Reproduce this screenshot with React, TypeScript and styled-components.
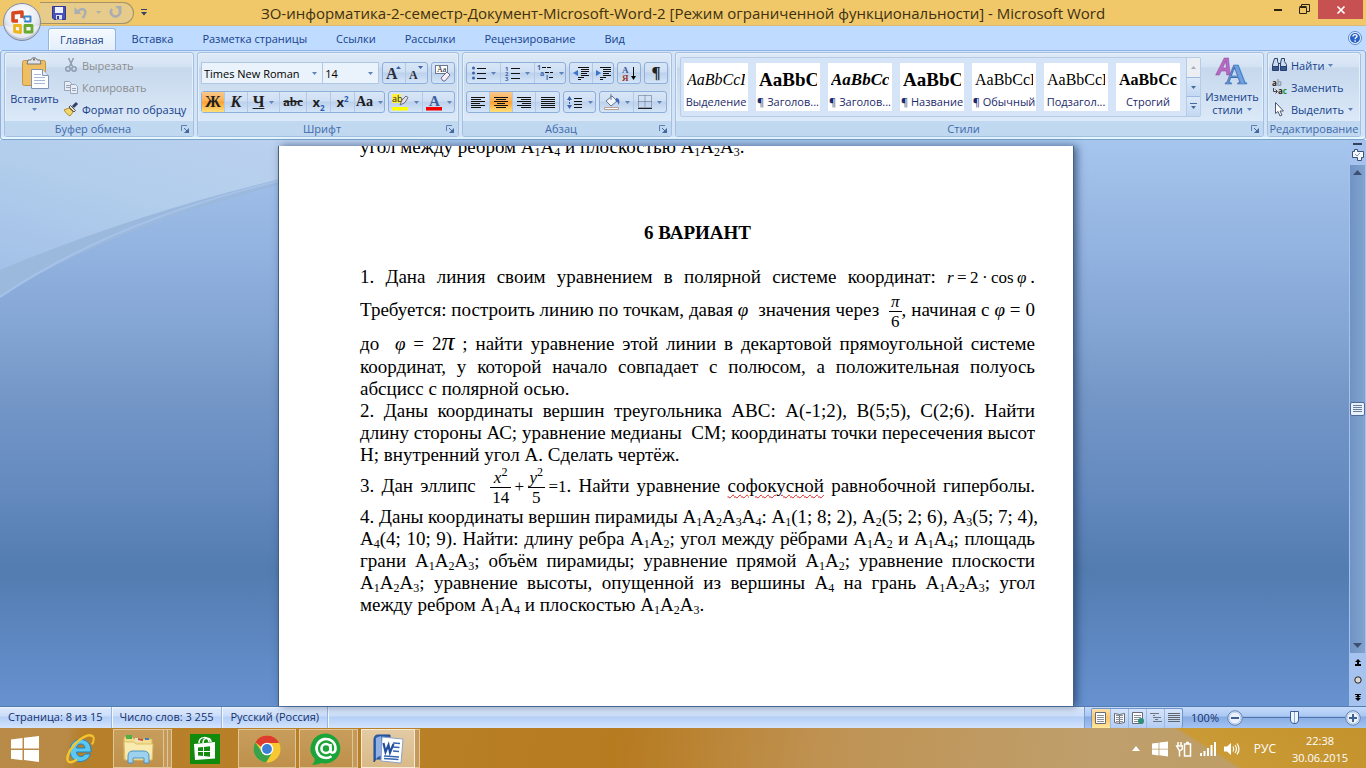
import React from "react";
import styled, { createGlobalStyle, css } from "styled-components";

const ui = `"Open Sans", "Noto Sans", sans-serif`;
const serif = `"Liberation Serif", serif`;

const GlobalStyle = createGlobalStyle`
  * { box-sizing: border-box; }
  body { margin: 0; font-family: ${ui}; font-size: 11px; color: #1e3c7b; }
  button, select, input { font: inherit; color: inherit; margin: 0; padding: 0; border: 0; background: none; }
  svg { display: block; flex: none; overflow: visible; }
  h1, h2, p { margin: 0; font-weight: normal; }
`;

const Window = styled.div`
  position: relative;
  display: flex;
  flex-direction: column;
  height: 100vh;
  overflow: hidden;
`;

/* ---------- title bar ---------- */
const TitleBar = styled.header`
  display: grid;
  grid-template-columns: 240px minmax(0, 1fr) 240px;
  height: 26px;
  flex: none;
  background: #f0c869;
  border-bottom: 1px solid #d9b878;
`;
const OfficeButton = styled.button`
  position: absolute;
  left: 2px;
  top: 2px;
  z-index: 2;
  border-radius: 50%;
`;
const QuickAccess = styled.div`
  display: flex;
  align-items: center;
  align-self: center;
  width: 94px;
  height: 22px;
  margin-left: 40px;
  padding-left: 12px;
  gap: 8px;
  border: 1px solid #a59267;
  border-left: 0;
  border-radius: 0 11px 11px 0;
  background: #e6cb8b;
`;
const QuickWrap = styled.div`
  display: flex;
  align-items: center;
  gap: 7px;
`;
const IconButton = styled.button`
  display: flex;
  align-items: center;
  justify-content: center;
`;
const Title = styled.h1`
  align-self: center;
  font-size: 15px;
  line-height: 24px;
  text-align: center;
  white-space: nowrap;
  color: #3d3013;
`;
const WindowButtons = styled.div`
  display: flex;
  justify-content: flex-end;
  padding-right: 3px;
`;
const WindowButton = styled.button<{ $close?: boolean }>`
  display: flex;
  align-items: center;
  justify-content: center;
  width: ${(p) => (p.$close ? 45 : 27)}px;
  height: 19px;
  background: ${(p) => (p.$close ? "#c75050" : "transparent")};
`;

/* ---------- tabs ---------- */
const Tabs = styled.nav`
  display: flex;
  flex: none;
  align-items: flex-end;
  height: 24px;
  padding: 0 4px 0 48px;
  background: #bfdbff;
`;
const Tab = styled.button<{ $active?: boolean }>`
  height: 22px;
  padding: 0 ${(p) => (p.$active ? 11 : 14)}px;
  margin-right: ${(p) => (p.$active ? 2 : 1)}px;
  line-height: 20px;
  color: #15428b;
  ${(p) =>
    p.$active &&
    css`
      border: 1px solid #92b5e4;
      border-bottom: 0;
      border-radius: 3px 3px 0 0;
      background: linear-gradient(#f5fafe, #e3eefa);
      box-shadow: inset 1px 1px 0 #fff;
    `}
`;
const HelpSlot = styled.button`
  margin: 0 0 5px auto;
`;

/* ---------- ribbon ---------- */
const Ribbon = styled.div`
  display: flex;
  flex: none;
  gap: 3px;
  height: 90px;
  padding: 1px 4px 3px 3px;
  border: 1px solid #8db2e3;
  border-bottom-color: #7aa3c9;
  border-radius: 3px;
  background: #d3e4f6;
  box-shadow: inset 0 -2px 0 #e4f6ff;
`;
const Group = styled.section<{ $w?: number }>`
  display: flex;
  flex-direction: column;
  ${(p) => (p.$w ? `width: ${p.$w}px; flex: none;` : "flex: 1; min-width: 0;")}
  height: 85px;
  overflow: hidden;
  border: 1px solid #a4bfdf;
  border-radius: 3px;
  background: linear-gradient(#dee9f6 0, #d3e2f3 14px, #c7d8ed 15px, #dbe9f8 68px);
  box-shadow: inset 0 0 0 1px #e6f0fa;
`;
const GroupBody = styled.div<{ $column?: boolean }>`
  display: flex;
  flex: 1;
  min-height: 0;
  padding: ${(p) => (p.$column ? "9px 3px 0" : "1px 4px 0")};
  flex-direction: ${(p) => (p.$column ? "column" : "row")};
  gap: ${(p) => (p.$column ? "7px" : "4px")};
`;
const GroupTitle = styled.div`
  display: flex;
  align-items: center;
  height: 15px;
  flex: none;
  color: #3e6aaa;
  background: #c1d8f1;
  h2 { flex: 1; font-size: 11px; line-height: 14px; text-align: center; white-space: nowrap; }
  button { padding-right: 4px; }
`;
const Row = styled.div`
  display: flex;
  gap: 3px;
`;
const Cluster = styled.div`
  display: flex;
  height: 22px;
  border: 1px solid #8eaedb;
  border-radius: 3px;
  background: linear-gradient(#d8e6f6 0, #cfdff3 9px, #bdd1ec 10px, #d3e5f8);
`;
const Tool = styled.button<{ $w: number; $on?: boolean }>`
  display: flex;
  align-items: center;
  justify-content: center;
  gap: 5px;
  width: ${(p) => p.$w}px;
  height: 20px;
  color: #1f1f1f;
  background: ${(p) => (p.$on ? "linear-gradient(#f9c88a 0, #fbb152 9px, #fd9f31 10px, #ffe079)" : "none")};
  & + & { border-left: 1px solid #b1c8e6; }
`;
const Glyph = styled.span<{ $size?: number; $bold?: boolean; $italic?: boolean; $line?: string; $sans?: boolean }>`
  font-family: ${(p) => (p.$sans ? ui : serif)};
  font-size: ${(p) => p.$size ?? 16}px;
  line-height: 20px;
  font-weight: ${(p) => (p.$bold ? "bold" : "normal")};
  font-style: ${(p) => (p.$italic ? "italic" : "normal")};
  text-decoration: ${(p) => p.$line ?? "none"};
  sup, sub { font-size: 8px; line-height: 0; color: #2b5cb0; }
`;
const Combo = styled.label<{ $w: number }>`
  display: flex;
  align-items: center;
  width: ${(p) => p.$w}px;
  height: 22px;
  padding-right: 5px;
  border: 1px solid #b0c8e6;
  background: #eaf2fb;
  select { appearance: none; flex: 1; min-width: 0; height: 20px; padding-left: 2px; color: #000; outline: 0; }
  & + & { border-left: 0; margin-left: -3px; }
`;
const BigButton = styled.button<{ $w: number }>`
  display: flex;
  flex-direction: column;
  align-items: center;
  width: ${(p) => p.$w}px;
  padding-top: 3px;
  line-height: 13px;
  white-space: nowrap;
  gap: 3px;
  color: #15428b;
`;
const CaretLine = styled.span`
  display: flex;
  align-items: center;
  justify-content: center;
  gap: 4px;
`;
const SmallList = styled.div`
  display: flex;
  flex-direction: column;
`;
const SmallButton = styled.button<{ $off?: boolean }>`
  display: flex;
  align-items: center;
  gap: 4px;
  height: 22px;
  white-space: nowrap;
  color: ${(p) => (p.$off ? "#8d8d8d" : "#15428b")};
`;
const Gallery = styled.div`
  display: flex;
  flex: 1;
  min-width: 0;
  height: 60px;
  margin-top: 3px;
  border: 1px solid #b5cbe6;
  border-radius: 2px;
  background: #d5e5f7;
`;
const GalleryItems = styled.div`
  display: flex;
  flex: 1;
  min-width: 0;
  padding: 5px 3px 0;
  gap: 8px;
  overflow: hidden;
`;
const StyleItem = styled.button`
  width: 64px;
  flex: none;
  height: 48px;
  overflow: hidden;
  background: #fff;
  white-space: nowrap;
  color: #1c2a6b;
`;
const Sample = styled.span<{ $bold?: boolean; $italic?: boolean; $size: number }>`
  display: block;
  height: 30px;
  margin: 0 3px;
  overflow: hidden;
  text-align: left;
  font-family: ${serif};
  font-size: ${(p) => p.$size}px;
  line-height: 32px;
  font-weight: ${(p) => (p.$bold ? "bold" : "normal")};
  font-style: ${(p) => (p.$italic ? "italic" : "normal")};
  color: #000;
`;
const StyleName = styled.span`
  display: block;
  line-height: 16px;
`;
const GalleryScroll = styled.div`
  display: flex;
  flex-direction: column;
  width: 14px;
  button { flex: 1; display: flex; align-items: center; justify-content: center; border-left: 1px solid #b5cbe6; background: linear-gradient(#dbe9f9, #c3d8f2); }
  button + button { border-top: 1px solid #9ebbdf; }
  button:first-child { background: #ebeef2; }
`;

/* ---------- workspace ---------- */
const Workspace = styled.main`
  position: relative;
  display: flex;
  flex: 1;
  min-height: 0;
  background: linear-gradient(#a6c6ee 0%, #93b3e0 19%, #84a6d5 33%, #7497c7 45%, #648abf 62%, #537cb0 76%, #6792d0 100%);
`;
const Swoosh = styled.svg`
  position: absolute;
  left: 0;
  top: 0;
`;
const Canvas = styled.div`
  position: relative;
  display: flex;
  flex: 1;
  justify-content: center;
  padding: 6px 0 0 3px;
`;
const Page = styled.article`
  width: 796px;
  padding: 0 38px 0 81px;
  overflow: hidden;
  border-left: 1px solid #48607f;
  border-right: 1px solid #48607f;
  background: #fff;
  box-shadow: 3px 0 8px rgba(30, 55, 95, 0.7);
  color: #000;
  font-family: ${serif};
  font-size: 19px;
`;
const Line = styled.p<{ $h?: number; $last?: boolean }>`
  height: ${(p) => p.$h ?? 22}px;
  line-height: ${(p) => p.$h ?? 22}px;
  white-space: nowrap;
  text-align: justify;
  text-align-last: ${(p) => (p.$last ? "left" : "justify")};
`;
const TopLine = styled(Line)`
  margin: -10px 0 64px;
`;
const Heading = styled.h2`
  margin-bottom: 22px;
  text-align: center;
  font-size: 19px;
  line-height: 22px;
  font-weight: bold;
`;
const Sub = styled.sub`
  font-size: 12px;
  line-height: 0;
  vertical-align: -3px;
`;
const Formula = styled.span`
  display: inline-block;
  font-size: 17px;
  line-height: 20px;
  text-align-last: left;
`;
const Var = styled.i<{ $size?: number }>`
  font-size: ${(p) => p.$size ?? 19}px;
  line-height: 0;
`;
const Fraction = styled.span`
  display: inline-block;
  vertical-align: middle;
  font-size: 17px;
  line-height: 19px;
  text-align: center;
  text-align-last: center;
  > span { display: block; padding: 0 2px; }
  > span:first-child { border-bottom: 1px solid #000; }
  sup { font-size: 12px; line-height: 0; }
`;
const Misspelt = styled.span`
  text-decoration: underline wavy #e02020 1px;
  text-underline-offset: 2px;
`;
const ScrollColumn = styled.div`
  position: relative;
  display: flex;
  flex-direction: column;
  align-items: center;
  width: 17px;
  gap: 4px;
  padding-top: 3px;
  background: #a5c3ee;
`;
const ScrollTrack = styled.div`
  display: flex;
  flex: 1;
  flex-direction: column;
  align-items: center;
  justify-content: space-between;
  width: 15px;
  padding: 5px 0;
  background: linear-gradient(90deg, #6f93c4, #82a3cf);
`;
const ScrollThumb = styled.button`
  display: flex;
  align-items: center;
  justify-content: center;
  width: 15px;
  height: 14px;
  border: 1px solid #4d6a99;
  border-radius: 2px;
  background: #e8f0fa;
`;
const BrowseButtons = styled.div`
  display: flex;
  flex-direction: column;
  align-items: center;
  gap: 10px;
  padding: 2px 0 5px;
`;

/* ---------- status bar ---------- */
const StatusBar = styled.footer`
  display: flex;
  flex: none;
  height: 22px;
  border-top: 1px solid #567db0;
  line-height: 20px;
  color: #15316b;
  background: linear-gradient(#f0f6ff 0, #dae7fa 2px, #cbdef9 9px, #b4cff7 10px, #d3e3fb);
`;
const StatusItem = styled.span`
  padding: 0 8px;
  border-right: 1px solid #98b5e2;
  box-shadow: 1px 0 0 #f2f7fe;
  white-space: nowrap;
`;
const StatusTools = styled.div`
  display: flex;
  align-items: center;
  margin-left: auto;
  padding: 0 5px 0 6px;
  border-left: 1px solid #7d9fce;
  background: linear-gradient(#c4dafa 0, #abc8f2 9px, #88ace4 10px, #a3c3f2);
`;
const ViewButtons = styled.div`
  display: flex;
  height: 20px;
  border: 1px solid #6f94c9;
  border-bottom: 0;
  border-radius: 2px;
  background: linear-gradient(#d5e4fa, #b3cdf3);
`;
const ViewButton = styled.button<{ $on?: boolean }>`
  display: flex;
  align-items: center;
  justify-content: center;
  width: 18px;
  background: ${(p) => (p.$on ? "linear-gradient(#fbe0b0, #fdc669 9px, #ffe9a0)" : "none")};
  & + & { border-left: 1px solid #9bb9e4; }
`;
const ZoomValue = styled.button`
  width: 44px;
`;
const ZoomSlider = styled.input`
  appearance: none;
  width: 102px;
  height: 18px;
  background: linear-gradient(#4f75ad, #4f75ad) center / 100% 1px no-repeat;
  &::-webkit-slider-thumb {
    appearance: none;
    width: 9px;
    height: 13px;
    border: 1px solid #3c5f96;
    border-radius: 1px 1px 5px 5px;
    background: linear-gradient(90deg, #eef4fd 3px, #8fa9d0 3px, #8fa9d0 4px, #eef4fd 4px);
  }
`;

/* ---------- taskbar ---------- */
const Taskbar = styled.footer`
  display: flex;
  flex: none;
  height: 40px;
  padding-top: 1px;
  color: #fff;
  background:
    linear-gradient(32deg, transparent 27%, #c99a35 29%, #c4922c) right / 200px 100% no-repeat,
    linear-gradient(100deg, #b98b48 0, #b98a45 5%, #b67f2a 6%, #b98026 30%, #b67a1f 45%, #bf9252 60%, #bf9f6c 80%, #bd9c60 100%);
`;
const TaskButton = styled.button<{ $w: number; $open?: boolean; $active?: boolean; $gap?: number }>`
  display: flex;
  align-items: center;
  justify-content: center;
  width: ${(p) => p.$w}px;
  margin-left: ${(p) => p.$gap ?? 3}px;
  ${(p) =>
    p.$open &&
    css`
      border: 1px solid #e0c596;
      background: linear-gradient(#c89d5c, #be904b);
    `}
  ${(p) => p.$active && "background: linear-gradient(#e3cba4, #d9b988); border-color: #f6ead6;"}
`;
const StackEdge = styled.span<{ $w: number }>`
  width: ${(p) => p.$w}px;
  border: 1px solid #e0c596;
  border-left: 0;
  background: #c4995a;
`;
const Tray = styled.div`
  display: flex;
  align-items: center;
  gap: 8px;
  margin-left: auto;
`;
const TrayArrow = styled(IconButton)`
  margin-right: 4px;
`;
const Language = styled.button`
  margin-left: 6px;
  font-size: 12px;
  color: #fff;
`;
const Clock = styled.time`
  width: 72px;
  margin-right: 10px;
  text-align: center;
  line-height: 17px;
`;

/* ---------- icons ---------- */
const Caret = ({ c = "#5f83b8" }: { c?: string }) => (
  <svg width="5" height="3" viewBox="0 0 5 3"><path d="M0 0h5L2.5 3z" fill={c} /></svg>
);
const Launcher = () => (
  <svg width="8" height="8" viewBox="0 0 8 8" fill="none" stroke="#5c7fae"><path d="M.5 6V.5H6" /><path d="M3 3l3 3" stroke="#45699c" /><path d="M8 3v5H3l5-5z" fill="#45699c" stroke="none" /></svg>
);
const Bars = ({ rows, w = 14, c = "#111" }: { rows: [number, number][]; w?: number; c?: string }) => (
  <svg width={w} height="13" viewBox={`0 0 ${w} 13`} stroke={c}>
    {rows.map(([a, b], i) => <path key={i} d={`M${a} ${i * 2 + 1.5}H${b}`} />)}
  </svg>
);
const OfficeLogo = () => (
  <svg width="40" height="40" viewBox="0 0 40 40">
    <defs>
      <radialGradient id="orb" cx=".5" cy=".3" r=".75"><stop offset="0" stopColor="#fff" /><stop offset=".55" stopColor="#e8ebf2" /><stop offset="1" stopColor="#a9b4c8" /></radialGradient>
    </defs>
    <circle cx="20" cy="20" r="18.5" fill="url(#orb)" stroke="#7f8ca6" />
    <path d="M3 23a17.500 17 0 0 0 34 0c-8 4-26 4-34 0z" fill="#fff" opacity=".55" />
    <g fill="none" strokeLinejoin="round">
      <path d="M16 19h-5v-8l9-1v6" stroke="#d8471d" strokeWidth="3.500" />
      <path d="M22 14.500h6.500v5H23z" stroke="#3b82c8" strokeWidth="2" />
      <path d="M12.500 23.500h6v7l-6-1z" stroke="#ecb41d" strokeWidth="2.800" />
      <path d="M23 23.500h7V30h-7z" stroke="#6aa92f" strokeWidth="2.800" />
    </g>
    <path d="M18 18l5 0M20.500 16v6" stroke="#f6f7fa" />
  </svg>
);
const Save = () => (
  <svg width="14" height="14" viewBox="0 0 14 14"><path d="M.5 .5h13v13H2l-1.500-1.500z" fill="#4b52b5" stroke="#32388c" /><path d="M3 1h8v6H3z" fill="#eef1fb" /><path d="M4 9h6v4.500H4z" fill="#dfe3f4" /><path d="M5 10h2v3H5z" fill="#32388c" /></svg>
);
const Undo = () => (
  <svg width="14" height="13" viewBox="0 0 14 13" fill="none" stroke="#a9aeb5" strokeWidth="2.500"><path d="M4 5.500C8 1 12.500 3.500 11 8q-.5 2-2.500 4" /><path d="M.5 1v7h7z" fill="#a9aeb5" stroke="none" /></svg>
);
const Redo = () => (
  <svg width="13" height="13" viewBox="0 0 13 13" fill="none" stroke="#a9aeb5" strokeWidth="2.500"><path d="M3 3a4.500 4.500 0 1 0 7.500 1" /><path d="M6 0h6.500v6.500z" fill="#a9aeb5" stroke="none" /></svg>
);
const MoreCaret = () => (
  <svg width="6" height="7" viewBox="0 0 6 7" fill="#33425e"><path d="M0 0h6v1H0zM0 3h6L3 6.500z" /></svg>
);
const Help = () => (
  <svg width="14" height="14" viewBox="0 0 14 14"><circle cx="7" cy="7" r="6.500" fill="#eaf2ff" stroke="#5a88cf" /><circle cx="7" cy="7" r="5" fill="#2a62c8" /><path d="M5 5.500C5 3 9 3 9 5.300 9 6.500 7.100 6.600 7.100 8.200M7.100 9.300v1.400" stroke="#fff" strokeWidth="1.400" fill="none" /></svg>
);
const Paste = () => (
  <svg width="28" height="32" viewBox="0 0 28 32">
    <rect x="1.500" y="3.500" width="23" height="25" rx="2" fill="#efbd62" stroke="#c6943c" />
    <path d="M7 3h3c0-3 6-3 6 0h3l1 4H6z" fill="#dfe2e6" stroke="#73777e" /><circle cx="13" cy="2.500" r="1" fill="#555" />
    <path d="M10.500 12.500h11l6 6v13h-17z" fill="#fdfeff" stroke="#8193b5" /><path d="M21.500 12.500v6h6" fill="#dfe8f6" stroke="#8193b5" />
    <path d="M13 17.500h7M13 20.500h11M13 23.500h11M13 26.500h11" stroke="#a6b8d8" />
  </svg>
);
const Cut = () => (
  <svg width="14" height="14" viewBox="0 0 14 14" fill="none" stroke="#8f9bb0" strokeWidth="1.500"><path d="M4.500 0l4 8.500M9.500 0l-4 8.500" /><circle cx="4" cy="11" r="2.200" /><circle cx="10" cy="11" r="2.200" /></svg>
);
const Copy = () => (
  <svg width="14" height="13" viewBox="0 0 14 13" fill="#e9eef5" stroke="#98a5ba"><path d="M.5 .5h5l2 2v7h-7zM2 4.500h4M2 6.500h4" /><path d="M6.500 3.500h5l2 2v7h-7zM8 7.500h4M8 9.500h4" /></svg>
);
const Brush = () => (
  <svg width="14" height="14" viewBox="0 0 14 14"><path d="M0 8l5-2 4 4-3 4c-2-1-4-3-6-6z" fill="#f1d66a" stroke="#b08a2c" /><path d="M5 5l5 5 1.500-1.500-5-5z" fill="#e9e4d4" stroke="#555" /><path d="M9 5l4-4" stroke="#33406a" strokeWidth="3" /></svg>
);
const Eraser = () => (
  <svg width="17" height="17" viewBox="0 0 17 17"><rect x=".5" y=".5" width="12" height="8" fill="#fff" stroke="#6b7891" /><text x="2" y="7" fontSize="8" fontFamily={serif} fill="#111">Aa</text><path d="M6 13l6-6 3 3-5 6H8z" fill="#f4f0f6" stroke="#6a6a8f" /></svg>
);
const Highlighter = () => (
  <svg width="17" height="17" viewBox="0 0 17 17"><path d="M0 0h9v9H0z" fill="#ffef3e" /><text x="0" y="8" fontSize="9" fontFamily={ui} fill="#222">ab</text><path d="M8 11l2-5 4-4 2 1.500-3 5z" fill="#e2e2ea" stroke="#6a6a78" /><path d="M0 13h16v3.500H0z" fill="#ffff00" /></svg>
);
const FontColor = () => (
  <svg width="16" height="17" viewBox="0 0 16 17"><text x="3" y="12" fontSize="15" fontWeight="bold" fontFamily={serif} fill="#3c5f9f">A</text><path d="M0 13h16v3.500H0z" fill="#f00000" /></svg>
);
const ResizeA = ({ up }: { up?: boolean }) => (
  <svg width="16" height="16" viewBox="0 0 16 16"><text x="0" y="14" fontSize={up ? 16 : 12} fontWeight="bold" fontFamily={serif} fill="#2a2f3a">A</text><path d={up ? "M10 4h5l-2.500-3z" : "M9 1h5l-2.500 3z"} fill="#3c62a8" /></svg>
);
const Bullets = () => (
  <svg width="14" height="14" viewBox="0 0 14 14"><path d="M5 2.500h9M5 7.500h9M5 12.500h9" stroke="#111" /><g fill="#3c5fa8"><circle cx="1.500" cy="2" r="1.500" /><circle cx="1.500" cy="7" r="1.500" /><circle cx="1.500" cy="12" r="1.500" /></g></svg>
);
const Numbers = () => (
  <svg width="15" height="15" viewBox="0 0 15 15"><path d="M6 2.500h9M6 7.500h9M6 12.500h9" stroke="#111" /><g fontSize="6" fontWeight="bold" fontFamily={ui} fill="#3c5fa8"><text x="0" y="4.500">1</text><text x="0" y="9.500">2</text><text x="0" y="14.500">3</text></g></svg>
);
const Multilevel = () => (
  <svg width="17" height="16" viewBox="0 0 17 16"><path d="M5 2.500h9M8 7.500h8M12 12.500h4" stroke="#111" strokeDasharray="4 1" /><g fontSize="7" fontWeight="bold" fontFamily={ui} fill="#3c5fa8"><text x="0" y="5">1</text><text x="3" y="11">a</text><text x="9" y="15">i</text></g></svg>
);
const Indent = ({ out }: { out?: boolean }) => (
  <svg width="16" height="13" viewBox="0 0 16 13" stroke="#111"><path d="M5 .5h11M8 2.500h8M8 4.500h8M8 6.500h6M8 8.500h8M5 10.500h6M5 12.500h3" /><path d={out ? "M5 3v6L0 6z" : "M1 3v6l5-3z"} fill="#3b74cf" stroke="none" /></svg>
);
const Sort = () => (
  <svg width="14" height="17" viewBox="0 0 14 17"><g fontSize="9" fontWeight="bold" fontFamily={serif}><text x="0" y="8" fill="#35549b">А</text><text x="0" y="16" fill="#9e3527">Я</text></g><path d="M11.500 2v12" stroke="#111" /><path d="M9 11h5l-2.500 4z" /></svg>
);
const Spacing = () => (
  <svg width="16" height="15" viewBox="0 0 16 15"><path d="M7 3.500h8M7 6.500h8M7 9.500h8M7 12.500h8" stroke="#111" /><path d="M0 5h5L2.500 1zM0 10h5l-2.500 4z" fill="#3c66b4" /><path d="M2.500 4v7" stroke="#3c66b4" strokeDasharray="2 1" /></svg>
);
const Bucket = () => (
  <svg width="16" height="16" viewBox="0 0 16 16"><path d="M2 7l6-5 5 5-6 5z" fill="#f3f6fb" stroke="#66748e" /><path d="M7 0v6" stroke="#66748e" /><path d="M12 4c4 0 4 4 2.500 7-.5-3-1-3-3-4z" fill="#3e68b5" /><path d="M.5 13.500h14v2H.500z" fill="#fff" stroke="#b79f92" /></svg>
);
const Borders = () => (
  <svg width="14" height="14" viewBox="0 0 14 14" stroke="#59667e" fill="none"><path d="M.5 .5h13v12H.500zM.5 6.500h13M7 .5v12" strokeDasharray="1 1" /><path d="M0 13.500h14" stroke="#222" /></svg>
);
const ChangeStyles = () => (
  <svg width="31" height="30" viewBox="0 0 31 30"><g fontFamily={ui} fontWeight="bold"><text x="0" y="18" fontSize="23" fontStyle="italic" fill="#b76ac4" stroke="#8c3f9d" strokeWidth=".5">A</text></g><g fontFamily={serif} fontWeight="bold"><text x="8" y="27" fontSize="30" fill="#6fa0e0" stroke="#2c5ca8" strokeWidth=".7">A</text></g></svg>
);
const Binoculars = () => (
  <svg width="15" height="14" viewBox="0 0 15 14" stroke="#27406f"><path d="M2.500 .5h3v3l1 2v6h-6V7zM9.500 .5h3v3l2 3v5h-6v-6z" fill="#cdd9ee" /><path d="M.5 8.500h6v4h-6zM8.500 8.500h6v4h-6z" fill="#3a5790" /><path d="M6 5.500h3" /></svg>
);
const Replace = () => (
  <svg width="15" height="15" viewBox="0 0 15 15" fontFamily={ui} fontWeight="bold" fontSize="8"><text x="0" y="6" fill="#222">a<tspan fill="#999">b</tspan></text><text x="6" y="14" fill="#222">a<tspan fill="#1f8f2a">c</tspan></text><path d="M1.500 8v3.500H5M3.500 9.500l2 2-2 2" fill="none" stroke="#444" /></svg>
);
const Pointer = () => (
  <svg width="15" height="15" viewBox="0 0 15 15"><path d="M3.500 .5v11l2.500-2 2 4.500 2-1-2-4h3.500z" fill="#fff" stroke="#4f5870" /></svg>
);
const Triangle = ({ up }: { up?: boolean }) => (
  <svg width="9" height="5" viewBox="0 0 9 5"><path d={up ? "M0 5h9L4.500 0z" : "M0 0h9L4.500 5z"} fill="#3d4f73" /></svg>
);
const DoubleArrow = ({ down }: { down?: boolean }) => (
  <svg width="6" height="7" viewBox="0 0 6 7"><path d={down ? "M0 0h6v1H0zM2 1h2v1h2L3 4 0 2h2zM0 4h6L3 7z" : "M0 3h6L3 0zM0 5h2V3h2v2h2v2H0z"} /></svg>
);
const BrowseDot = () => (
  <svg width="8" height="8" viewBox="0 0 8 8"><circle cx="4" cy="4" r="3.200" fill="#d9d9d2" stroke="#222" /></svg>
);
const RulerIcon = () => (
  <svg width="12" height="12" viewBox="0 0 12 12"><path d="M.5 2.500h2v-2h3v2h6v6h-2v3h-4v-3h-5z" fill="#f4f7fc" stroke="#3d4f73" /><path d="M3 5l2 2 3-3" fill="none" stroke="#8894ae" /></svg>
);
const ZoomSign = ({ plus }: { plus?: boolean }) => (
  <svg width="16" height="16" viewBox="0 0 16 16"><circle cx="8" cy="8" r="7.200" fill="#e9f1fc" stroke="#5c7eb0" /><circle cx="8" cy="8" r="5.800" fill="none" stroke="#b9cdea" /><path d={plus ? "M4 8h8M8 4v8" : "M4 8h8"} stroke="#3f5f92" strokeWidth="2" /></svg>
);
const DocView = ({ book, globe }: { book?: boolean; globe?: boolean }) => (
  <svg width="12" height="12" viewBox="0 0 12 12"><path d={book ? "M.5 1.500l5 1 5-1v9l-5 1-5-1zM5.500 2.500v9" : "M.5 .5h10v11H.500z"} fill="#fff" stroke="#666b78" /><path d="M2 3.500h7M2 5.500h7M2 7.500h7M2 9.500h7" stroke="#8a8f9a" />{globe && <circle cx="9" cy="9" r="3" fill="#2f8f7a" />}</svg>
);
const WinLogo = ({ s }: { s: number }) => (
  <svg width={s} height={s} viewBox="0 0 28 26" fill="#fff"><path d="M0 3.500L11.500 2v10.500H0zM13 1.800L28 0v12.500H13zM0 14h11.500v10.300L0 22.700zM13 14h15v12l-15-1.900z" /></svg>
);
const Explorer = () => (
  <svg width="31" height="30" viewBox="0 0 31 30"><path d="M1 3h8l2 2h18v20H1z" fill="#f3dc8e" stroke="#d6b453" /><path d="M3 1h6v4H3z" fill="#4fb04a" /><path d="M12 4h6v4h-6z" fill="#e9e3c4" /><path d="M15 5l5 1" stroke="#c54f34" strokeWidth="2" /><path d="M22 5h4" stroke="#3a7fc4" strokeWidth="2" /><path d="M1 8h10l2 2h17l-1 16H2z" fill="#f9ebb0" stroke="#dcbf67" /><path d="M5 29v-7q0-5 5-5h10q6 0 6 5v7h-5v-5H10v5z" fill="#9ed1ee" stroke="#4d93c4" /></svg>
);
const Explorer2 = () => (
  <svg width="32" height="32" viewBox="0 0 32 32"><path d="M25.500 21c-2 5-6 7.500-10.500 7.500C8.500 28.500 5 23.500 5 17.500 5 11 9.500 6.500 15.500 6.500c7 0 11 5 10.500 12.500H11.500c.3 3 2 4.500 4.500 4.500 2 0 3.200-1 4-2.500zM11.500 15h8.500c-.2-2.500-1.800-4-4.200-4s-4 1.500-4.300 4z" fill="#5cc8f2" stroke="#1d84c4" /><path d="M28 3.500C24 0 15 5 9 12 3 19 .5 27 4 29c2 1 5-.5 8-2.500" fill="none" stroke="#f4c52c" strokeWidth="2.500" /><path d="M28 3.500c2 2 .5 5-1 8" fill="none" stroke="#f4c52c" strokeWidth="2" /></svg>
);
const Store = () => (
  <svg width="30" height="30" viewBox="0 0 30 30"><path d="M0 0h30v30H0z" fill="#128a0e" /><path d="M4 10l21-2v16.500L5 26z" fill="#fff" /><path d="M9 9c0-7 10-7 10-1M13 9c0-6 8-6 8-1" fill="none" stroke="#fff" strokeWidth="1.500" /><path d="M8 13.500l5-.5v4H8zM14 13l6-.7v4.700h-6zM8 18h5v4l-5-.5zM14 18h6v4.700l-6-.7z" fill="#128a0e" /></svg>
);
const Chrome = () => (
  <svg width="28" height="28" viewBox="0 0 28 28"><circle cx="14" cy="14" r="13.500" fill="#f7c82f" /><path d="M2.300 7.200A13.500 13.500 0 0 1 26 8H14a6 6 0 0 0-5.500 4z" fill="#dd3b2d" /><path d="M2.300 7.200A13.500 13.500 0 0 0 13 27.500l6-9.500c-3 3-8 2-10-1z" fill="#3ba24b" /><circle cx="14" cy="14" r="6.300" fill="#fff" /><circle cx="14" cy="14" r="4.900" fill="#3c7fd6" /></svg>
);
const Agent = () => (
  <svg width="32" height="32" viewBox="0 0 32 32"><path d="M16 .5a15.500 15 0 1 1-5 29.500c-3 1.500-6 2-9 1.500 2-1.500 3-3.500 2.500-6A15.500 15 0 0 1 16 .5z" fill="#1aa43a" /><g fill="none" stroke="#fff" strokeWidth="2.600"><circle cx="16" cy="15.500" r="4.500" /><path d="M20.500 11v6c0 4.500 5 3 5-1.500a9.500 9.500 0 1 0-4 7.700" /></g></svg>
);
const WordLogo = () => (
  <svg width="31" height="30" viewBox="0 0 31 30"><path d="M5 1h12v24H3L1 28V6q0-5 4-5z" fill="#2d62b4" stroke="#1d468c" /><path d="M3 4l5-2v20q-4 0-5 4z" fill="#a9c6ee" opacity=".8" /><path d="M9 3l21 2-2 24-20-2z" fill="#fff" stroke="#8ba3c9" /><path d="M20 9l7 .5M20 13l6.500 .5M20 17l6 .5M11 22l15 1M11 24.500l14.500 1" stroke="#3465af" strokeWidth="1.500" /><path d="M10.500 9l2 9 3-7 1.500 7.500L20.500 10" fill="none" stroke="#234f9e" strokeWidth="2.200" /></svg>
);
const Power = () => (
  <svg width="16" height="16" viewBox="0 0 16 16" fill="none" stroke="#fff" strokeWidth="1.500"><path d="M2 1v4M5 1v4M.7 5h5.600v3L3.500 10zM3.500 10v5.500" /><path d="M8.500 3h6v12h-6zM10 1.500h3" /></svg>
);
const Signal = () => (
  <svg width="16" height="14" viewBox="0 0 16 14" fill="#fff"><path d="M0 11h2v3H0zM3.500 9h2v5h-2zM7 6h2v8H7zM10.500 3h2v11h-2zM14 0h2v14h-2z" /></svg>
);
const Volume = () => (
  <svg width="16" height="14" viewBox="0 0 16 14"><path d="M0 4.500h3L7 1v12L3 9.500H0z" fill="#fff" /><path d="M9 4.500q1.500 2.500 0 5M11 3q3 4 0 8M13 1.500q4 5.500 0 11" fill="none" stroke="#fff" strokeWidth="1.200" /></svg>
);

/* ---------- data ---------- */
const tabs = ["Главная", "Вставка", "Разметка страницы", "Ссылки", "Рассылки", "Рецензирование", "Вид"];
const styleItems = [
  { name: "Выделение", text: "AaBbCcI", size: 16, italic: true },
  { name: "¶ Заголов...", text: "AaBbC", size: 19, bold: true },
  { name: "¶ Заголов...", text: "AaBbCc", size: 17, bold: true, italic: true },
  { name: "¶ Название", text: "AaBbC", size: 19, bold: true },
  { name: "¶ Обычный", text: "AaBbCcI", size: 16 },
  { name: "Подзагол...", text: "AaBbCcI", size: 16 },
  { name: "Строгий", text: "AaBbCcI", size: 16, bold: true },
];

const GroupFooter = ({ title, plain }: { title: string; plain?: boolean }) => (
  <GroupTitle>
    <h2>{title}</h2>
    {!plain && <button aria-label={title}><Launcher /></button>}
  </GroupTitle>
);

/* Vertices with numeric indices: n="12" gives A₁A₂. */
const V = ({ n }: { n: string }) => (
  <>{n.split("").map((d, i) => <React.Fragment key={i}>А<Sub>{d}</Sub></React.Fragment>)}</>
);

export default function App() {
  return (
    <Window>
      <GlobalStyle />
      <OfficeButton aria-label="Office"><OfficeLogo /></OfficeButton>
      <TitleBar>
        <QuickWrap>
          <QuickAccess>
            <IconButton aria-label="Сохранить"><Save /></IconButton>
            <IconButton aria-label="Отменить"><Undo /></IconButton>
            <Caret c="#a9aeb5" />
            <IconButton aria-label="Повторить"><Redo /></IconButton>
          </QuickAccess>
          <IconButton aria-label="Настройка панели"><MoreCaret /></IconButton>
        </QuickWrap>
        <Title>ЗО-информатика-2-семестр-Документ-Microsoft-Word-2 [Режим ограниченной функциональности] - Microsoft Word</Title>
        <WindowButtons>
          <WindowButton aria-label="Свернуть"><svg width="8" height="2"><path d="M0 0h8v2H0z" fill="#2d2410" /></svg></WindowButton>
          <WindowButton aria-label="Восстановить"><svg width="11" height="11" viewBox="0 0 11 11" fill="none" stroke="#2d2410"><path d="M.5 3.500h7v6h-7zM.5 2.500h7M2.500 2V.500h8v7H8" /></svg></WindowButton>
          <WindowButton $close aria-label="Закрыть"><svg width="8" height="8" viewBox="0 0 8 8" stroke="#fff" strokeWidth="1.700"><path d="M.5 .5l7 7M7.500 .5l-7 7" /></svg></WindowButton>
        </WindowButtons>
      </TitleBar>

      <Tabs>
        {tabs.map((t, i) => <Tab key={t} $active={i === 0}>{t}</Tab>)}
        <HelpSlot aria-label="Справка"><Help /></HelpSlot>
      </Tabs>

      <Ribbon>
        <Group $w={190}>
          <GroupBody>
            <BigButton $w={51}><Paste />Вставить<Caret /></BigButton>
            <SmallList>
              <SmallButton $off><Cut />Вырезать</SmallButton>
              <SmallButton $off><Copy />Копировать</SmallButton>
              <SmallButton><Brush />Формат по образцу</SmallButton>
            </SmallList>
          </GroupBody>
          <GroupFooter title="Буфер обмена" />
        </Group>

        <Group $w={262}>
          <GroupBody $column>
            <Row>
              <Combo $w={125}><select aria-label="Шрифт"><option>Times New Roman</option></select><Caret /></Combo>
              <Combo $w={57}><select aria-label="Размер"><option>14</option></select><Caret /></Combo>
              <Cluster><Tool $w={22} aria-label="Увеличить"><ResizeA up /></Tool><Tool $w={22} aria-label="Уменьшить"><ResizeA /></Tool></Cluster>
              <Cluster><Tool $w={22} aria-label="Очистить формат"><Eraser /></Tool></Cluster>
            </Row>
            <Row>
              <Cluster>
                <Tool $w={22} $on><Glyph $bold>Ж</Glyph></Tool>
                <Tool $w={23}><Glyph $bold $italic>К</Glyph></Tool>
                <Tool $w={32}><Glyph $bold $line="underline">Ч</Glyph><Caret /></Tool>
                <Tool $w={27}><Glyph $size={13} $bold $line="line-through">abc</Glyph></Tool>
                <Tool $w={24}><Glyph $size={13} $bold $sans>x<sub>2</sub></Glyph></Tool>
                <Tool $w={24}><Glyph $size={13} $bold $sans>x<sup>2</sup></Glyph></Tool>
                <Tool $w={30}><Glyph $size={14} $bold>Aa</Glyph><Caret /></Tool>
              </Cluster>
              <Cluster>
                <Tool $w={33} aria-label="Цвет выделения"><Highlighter /><Caret /></Tool>
                <Tool $w={32} aria-label="Цвет текста"><FontColor /><Caret /></Tool>
              </Cluster>
            </Row>
          </GroupBody>
          <GroupFooter title="Шрифт" />
        </Group>

        <Group $w={210}>
          <GroupBody $column>
            <Row>
              <Cluster>
                <Tool $w={33} aria-label="Маркеры"><Bullets /><Caret /></Tool>
                <Tool $w={34} aria-label="Нумерация"><Numbers /><Caret /></Tool>
                <Tool $w={31} aria-label="Многоуровневый список"><Multilevel /><Caret /></Tool>
              </Cluster>
              <Cluster><Tool $w={22} aria-label="Уменьшить отступ"><Indent out /></Tool><Tool $w={21} aria-label="Увеличить отступ"><Indent /></Tool></Cluster>
              <Cluster><Tool $w={22} aria-label="Сортировка"><Sort /></Tool></Cluster>
              <Cluster><Tool $w={22}><Glyph $size={17} $bold>¶</Glyph></Tool></Cluster>
            </Row>
            <Row>
              <Cluster>
                <Tool $w={22} aria-label="По левому краю"><Bars rows={[[0, 14], [0, 10], [0, 14], [0, 9], [0, 14], [0, 10]]} /></Tool>
                <Tool $w={23} $on aria-label="По центру"><Bars rows={[[0, 14], [2, 12], [0, 14], [3, 11], [0, 14], [2, 12]]} /></Tool>
                <Tool $w={23} aria-label="По правому краю"><Bars rows={[[0, 14], [4, 14], [0, 14], [5, 14], [0, 14], [4, 14]]} /></Tool>
                <Tool $w={24} aria-label="По ширине"><Bars rows={[[0, 14], [0, 14], [0, 14], [0, 14], [0, 14], [0, 14]]} /></Tool>
              </Cluster>
              <Cluster><Tool $w={31} aria-label="Интервал"><Spacing /><Caret /></Tool></Cluster>
              <Cluster>
                <Tool $w={33} aria-label="Заливка"><Bucket /><Caret /></Tool>
                <Tool $w={33} aria-label="Границы"><Borders /><Caret /></Tool>
              </Cluster>
            </Row>
          </GroupBody>
          <GroupFooter title="Абзац" />
        </Group>

        <Group>
          <GroupBody>
            <Gallery>
              <GalleryItems>
                {styleItems.map((s, i) => (
                  <StyleItem key={i}>
                    <Sample $size={s.size} $bold={s.bold} $italic={s.italic}>{s.text}</Sample>
                    <StyleName>{s.name}</StyleName>
                  </StyleItem>
                ))}
              </GalleryItems>
              <GalleryScroll>
                <button aria-label="Вверх"><svg width="5" height="3"><path d="M0 3h5L2.500 0z" fill="#a9adb5" /></svg></button>
                <button aria-label="Вниз"><Caret c="#45699c" /></button>
                <button aria-label="Ещё"><svg width="7" height="7" viewBox="0 0 7 7" fill="#45699c"><path d="M0 0h7v1H0zM1 3h5L3.500 6z" /></svg></button>
              </GalleryScroll>
            </Gallery>
            <BigButton $w={54}><ChangeStyles /><span>Изменить<CaretLine>стили<Caret /></CaretLine></span></BigButton>
          </GroupBody>
          <GroupFooter title="Стили" />
        </Group>

        <Group $w={94}>
          <GroupBody>
            <SmallList>
              <SmallButton><Binoculars />Найти<Caret /></SmallButton>
              <SmallButton><Replace />Заменить</SmallButton>
              <SmallButton><Pointer />Выделить<Caret /></SmallButton>
            </SmallList>
          </GroupBody>
          <GroupFooter title="Редактирование" plain />
        </Group>
      </Ribbon>

      <Workspace>
        <Swoosh width="420" height="180" viewBox="0 0 420 180">
          <defs>
            <linearGradient id="sky" x1="0" y1="1" x2="1" y2="0"><stop offset="0" stopColor="#a3c0e8" /><stop offset=".45" stopColor="#b2ceec" /><stop offset="1" stopColor="#bed2f0" /></linearGradient>
          </defs>
          <path d="M0 0H420V15Q150 62 0 157z" fill="#9bb8dd" />
          <path d="M0 157Q110 82 279 41" fill="none" stroke="#a6c2e8" strokeWidth="2" />
          <path d="M0 0H420V10Q190 50 0 130z" fill="url(#sky)" />
        </Swoosh>
        <Canvas>
          <Page>
            <TopLine $last>угол между ребром <V n="14" /> и плоскостью <V n="123" />.</TopLine>
            <Heading>6 ВАРИАНТ</Heading>
            <Line>1. Дана линия своим уравнением в полярной системе координат: <Formula><i>r</i>&thinsp;=&thinsp;2&thinsp;·&thinsp;cos&thinsp;<i>φ</i></Formula>&thinsp;.</Line>
            <Line $h={44}>Требуется: построить линию по точкам, давая <Var>φ</Var>&nbsp; значения через&nbsp; <Fraction><span><i>π</i></span><span>6</span></Fraction>, начиная с <Var>φ</Var> = 0</Line>
            <Line $h={24}>до&nbsp; <Var>φ</Var> = 2<Var $size={26}>π</Var> ; найти уравнение этой линии в декартовой прямоугольной системе</Line>
            <Line>координат, у которой начало совпадает с полюсом, а положительная полуось</Line>
            <Line $last>абсцисс с полярной осью.</Line>
            <Line>2. Даны координаты вершин треугольника АВС: А(-1;2), В(5;5), С(2;6). Найти</Line>
            <Line>длину стороны АС; уравнение медианы&nbsp; СМ; координаты точки пересечения высот</Line>
            <Line $last>Н; внутренний угол А. Сделать чертёж.</Line>
            <Line $h={40}>3. Дан эллипс&nbsp; <Fraction><span><i>x</i><sup>2</sup></span><span>14</span></Fraction><Formula>&thinsp;+&thinsp;</Formula><Fraction><span><i>y</i><sup>2</sup></span><span>5</span></Fraction><Formula>&thinsp;=1</Formula>. Найти уравнение <Misspelt>софокусной</Misspelt> равнобочной гиперболы.</Line>
            <Line>4. Даны координаты вершин пирамиды <V n="1234" />: <V n="1" />(1; 8; 2), <V n="2" />(5; 2; 6), <V n="3" />(5; 7; 4),</Line>
            <Line><V n="4" />(4; 10; 9). Найти: длину ребра <V n="12" />; угол между рёбрами <V n="12" /> и <V n="14" />; площадь</Line>
            <Line>грани <V n="123" />; объём пирамиды; уравнение прямой <V n="12" />; уравнение плоскости</Line>
            <Line><V n="123" />; уравнение высоты, опущенной из вершины <V n="4" /> на грань <V n="123" />; угол</Line>
            <Line $last>между ребром <V n="14" /> и плоскостью <V n="123" />.</Line>
          </Page>
        </Canvas>
        <ScrollColumn>
          <svg width="9" height="2"><path d="M0 0h9v2H0z" fill="#33425e" /></svg>
          <IconButton aria-label="Линейка"><RulerIcon /></IconButton>
          <ScrollTrack>
            <Triangle up />
            <ScrollThumb aria-label="Прокрутка"><svg width="9" height="8" viewBox="0 0 9 8" stroke="#6b7d9c"><path d="M0 .5h9M0 2.500h9M0 4.500h9M0 6.500h9" /></svg></ScrollThumb>
            <Triangle />
          </ScrollTrack>
          <BrowseButtons><DoubleArrow /><BrowseDot /><DoubleArrow down /></BrowseButtons>
        </ScrollColumn>
      </Workspace>

      <StatusBar>
        <StatusItem>Страница: 8 из 15</StatusItem>
        <StatusItem>Число слов: 3 255</StatusItem>
        <StatusItem>Русский (Россия)</StatusItem>
        <StatusTools>
          <ViewButtons>
            <ViewButton $on aria-label="Разметка"><DocView /></ViewButton>
            <ViewButton aria-label="Чтение"><DocView book /></ViewButton>
            <ViewButton aria-label="Веб"><DocView globe /></ViewButton>
            <ViewButton aria-label="Структура"><Bars w={12} c="#70747e" rows={[[0, 9], [3, 5], [3, 11], [5, 8], [3, 12]]} /></ViewButton>
            <ViewButton aria-label="Черновик"><Bars w={12} c="#60646e" rows={[[0, 12], [0, 12], [0, 12], [0, 12], [0, 12]]} /></ViewButton>
          </ViewButtons>
          <ZoomValue>100%</ZoomValue>
          <IconButton aria-label="Уменьшить масштаб"><ZoomSign /></IconButton>
          <ZoomSlider type="range" aria-label="Масштаб" defaultValue={50} />
          <IconButton aria-label="Увеличить масштаб"><ZoomSign plus /></IconButton>
        </StatusTools>
      </StatusBar>

      <Taskbar>
        <TaskButton $w={50} $gap={0} aria-label="Пуск"><WinLogo s={28} /></TaskButton>
        <TaskButton $w={56} aria-label="Internet Explorer"><Explorer2 /></TaskButton>
        <TaskButton $w={51} $open $gap={4} aria-label="Проводник"><Explorer /></TaskButton><StackEdge $w={4} /><StackEdge $w={4} />
        <TaskButton $w={56} $gap={5} aria-label="Магазин"><Store /></TaskButton>
        <TaskButton $w={58} $open $gap={5} aria-label="Chrome"><Chrome /></TaskButton>
        <TaskButton $w={54} $open aria-label="Агент"><Agent /></TaskButton><StackEdge $w={5} />
        <TaskButton $w={54} $open $active aria-label="Word"><WordLogo /></TaskButton><StackEdge $w={5} />
        <Tray>
          <TrayArrow aria-label="Скрытые значки"><svg width="8" height="5"><path d="M0 5h8L4 0z" fill="#fff" /></svg></TrayArrow>
          <WinLogo s={16} />
          <Power />
          <Signal />
          <Volume />
          <Language>РУС</Language>
          <Clock>22:38<br />30.06.2015</Clock>
        </Tray>
      </Taskbar>
    </Window>
  );
}
